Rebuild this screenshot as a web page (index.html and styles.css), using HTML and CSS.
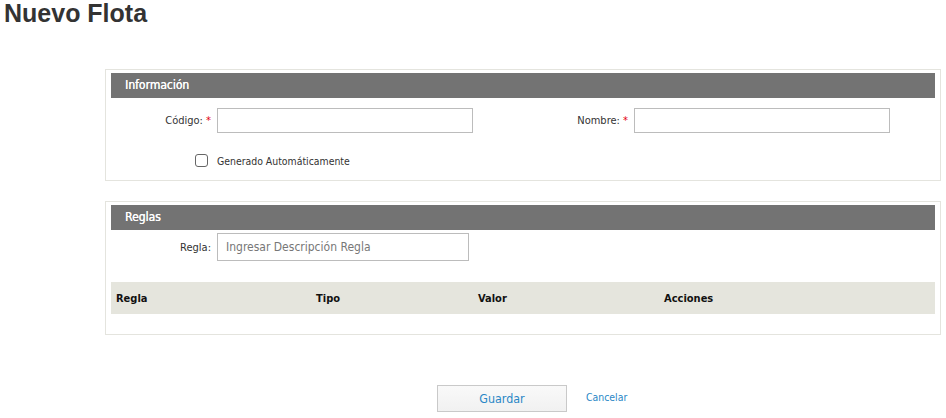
FILE: index.html
```html
<!DOCTYPE html>
<html lang="es">
<head>
<meta charset="utf-8">
<title>Nuevo Flota</title>
<link rel="stylesheet" href="styles.css">
</head>
<body>
<h1 class="page-title">Nuevo Flota</h1>

<section class="panel panel-info">
  <div class="panel-header">Información</div>
  <div class="field-row">
    <div class="field field-left">
      <label class="field-label">Código: <span class="req">*</span></label>
      <input class="text-input" type="text">
    </div>
    <div class="field field-right">
      <label class="field-label">Nombre: <span class="req">*</span></label>
      <input class="text-input" type="text">
    </div>
  </div>
  <div class="check-row">
    <span class="checkbox"></span>
    <span class="check-label">Generado Automáticamente</span>
  </div>
</section>

<section class="panel panel-rules">
  <div class="panel-header">Reglas</div>
  <div class="field field-rule">
    <label class="field-label">Regla:</label>
    <input class="text-input rule-input" type="text" placeholder="Ingresar Descripción Regla">
  </div>
  <div class="table-head">
    <span class="col col-regla">Regla</span>
    <span class="col col-tipo">Tipo</span>
    <span class="col col-valor">Valor</span>
    <span class="col col-acciones">Acciones</span>
  </div>
</section>

<div class="actions">
  <button class="btn-save" type="button">Guardar</button>
  <a class="link-cancel" href="#">Cancelar</a>
</div>
</body>
</html>
```

FILE: styles.css
```css
html, body {
  margin: 0;
  padding: 0;
  background: #fff;
}
body {
  font-family: "DejaVu Sans Condensed", "DejaVu Sans", sans-serif;
  font-size: 11px;
  color: #333;
  width: 946px;
}
.page-title {
  font-family: "Liberation Sans", Arial, sans-serif;
  font-weight: bold;
  font-size: 25px;
  line-height: 26px;
  color: #333;
  margin: 0;
  padding: 0 0 0 4px;
}
.panel {
  box-sizing: border-box;
  margin-left: 105px;
  width: 836px;
  border: 1px solid #e4e4de;
  padding: 3px 5px 0 5px;
}
.panel-info {
  margin-top: 43px;
  height: 112px;
}
.panel-rules {
  margin-top: 20px;
  height: 134px;
}
.panel-header {
  background: #737373;
  color: #fff;
  height: 25px;
  line-height: 25px;
  padding-left: 14px;
  font-size: 12px;
  text-shadow: 0.3px 0 0 #fff;
}
.field-row {
  display: flex;
  margin-top: 10px;
}
.field {
  display: flex;
  align-items: center;
}
.field-left {
  width: 412px;
}
.field-label {
  box-sizing: border-box;
  text-align: right;
  padding-right: 6px;
  color: #333;
}
.field-left .field-label { width: 106px; }
.field-right .field-label { width: 111px; }
.req {
  color: #e3000f;
}
.text-input {
  box-sizing: border-box;
  width: 256px;
  height: 25px;
  border: 1px solid #bcbcbc;
  margin: 0;
  padding: 0 8px;
  font-family: inherit;
  font-size: 11px;
  background: #fff;
}
.check-row {
  display: flex;
  align-items: center;
  margin-top: 21px;
  padding-left: 84px;
}
.checkbox {
  box-sizing: border-box;
  width: 13px;
  height: 13px;
  border: 1px solid #666;
  border-radius: 3px;
  background: #fff;
  margin-right: 9px;
}
.check-label {
  color: #333;
  font-size: 10.4px;
}
.field-rule {
  margin-top: 3px;
}
.field-rule .field-label {
  width: 106px;
}
.rule-input {
  width: 252px;
  height: 28px;
  font-size: 12px;
  padding: 0 8px;
}
.rule-input::placeholder {
  color: #777;
}
.table-head {
  display: flex;
  align-items: center;
  margin-top: 21px;
  height: 32px;
  background: #e5e5dd;
  font-weight: bold;
  color: #111;
}
.col { display: block; }
.col-regla { width: 200px; padding-left: 5px; }
.col-tipo { width: 162px; }
.col-valor { width: 186px; }
.col-acciones { width: 100px; }
.actions {
  display: flex;
  align-items: center;
  margin-top: 50px;
  padding-left: 437px;
}
.btn-save {
  box-sizing: border-box;
  width: 130px;
  height: 27px;
  border: 1px solid #c9c9c9;
  background: linear-gradient(#f9f9f9, #f1f1f1);
  color: #2a87c6;
  font-family: inherit;
  font-size: 12.4px;
  padding: 0;
  margin: 0;
}
.link-cancel {
  margin-left: 19px;
  margin-bottom: 3px;
  color: #2a87c6;
  text-decoration: none;
  font-size: 10.4px;
}
```
